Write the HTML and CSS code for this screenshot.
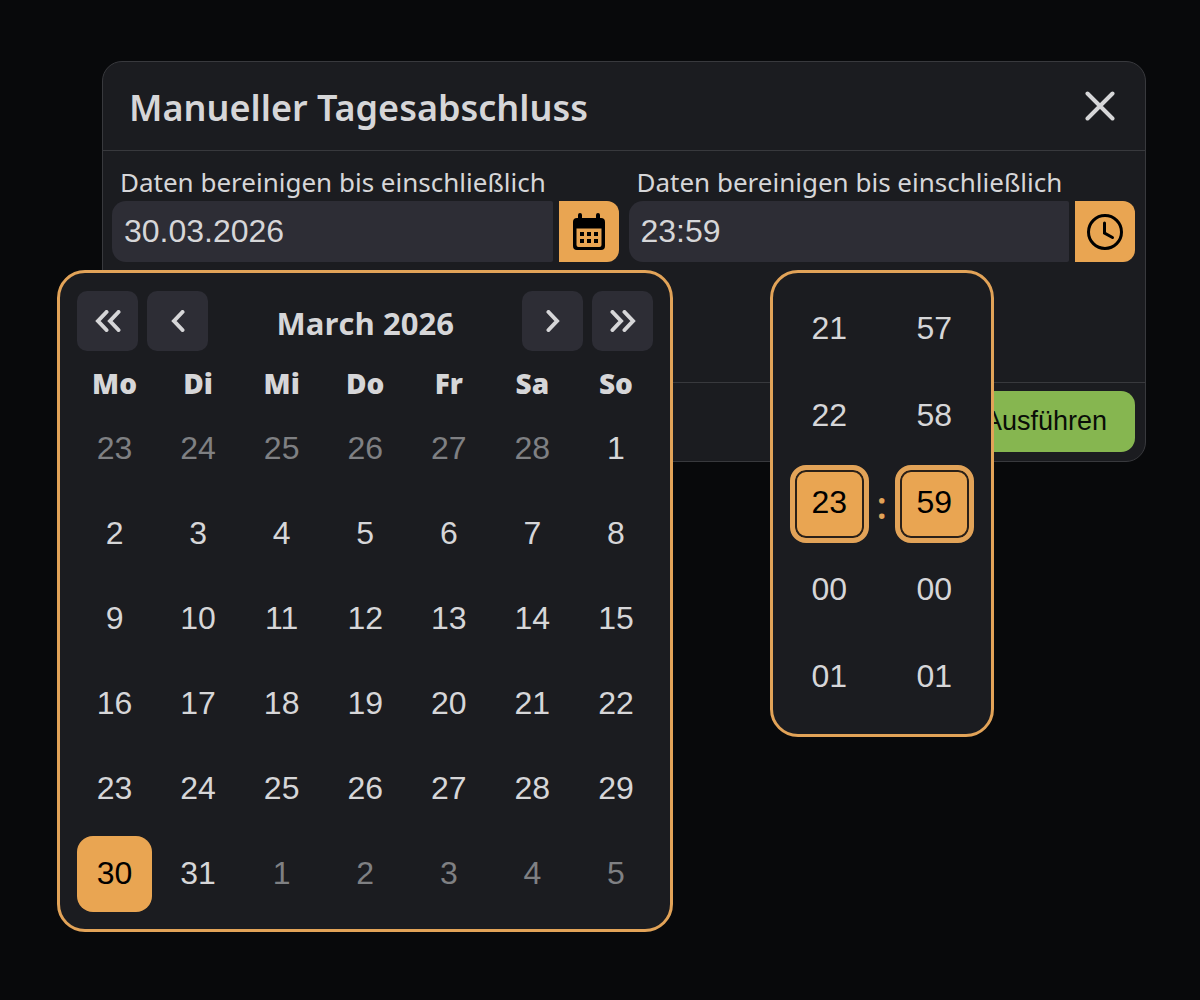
FILE: index.html
```html
<!DOCTYPE html>
<html lang="de">
  <head>
    <meta charset="UTF-8" />
    <meta name="viewport" content="width=device-width, initial-scale=1.0" />
    <title>Manueller Tagesabschluss</title>
    <link rel="stylesheet" href="styles.css">
  </head>
  <body>
    <form class="dialog" role="dialog" aria-labelledby="dialog-title">
      <div class="dialog-header">
        <h1 id="dialog-title">Manueller Tagesabschluss</h1>
        <button type="button" class="close" aria-label="Schließen">
          <svg width="30" height="30" viewBox="0 0 30 30"><path d="M2.5 2.5l25 25M27.5 2.5l-25 25" /></svg>
        </button>
      </div>

      <div class="dialog-body">
        <div class="field">
          <label for="date">Daten bereinigen bis einschließlich</label>
          <div class="input-group">
            <input type="text" id="date" value="30.03.2026" />
            <button type="button" class="picker-toggle" aria-label="Kalender">
              <svg width="34" height="38" viewBox="0 0 34 38">
                <path fill-rule="evenodd" d="M6 2a2 2 0 0 1 4 0V5h14V2a2 2 0 0 1 4 0V5h1a4 4 0 0 1 4 4v24a4 4 0 0 1-4 4H5a4 4 0 0 1-4-4V9a4 4 0 0 1 4-4h1zM4.500 15.500v16.500a2 2 0 0 0 2 2h21a2 2 0 0 0 2-2V15.500z" />
                <path d="M8 19h4v4H8zM15 19h4v4h-4zM22 19h4v4h-4zM8 26h4v4H8zM15 26h4v4h-4zM22 26h4v4h-4z" />
              </svg>
            </button>
          </div>

          <div class="popup calendar">
            <div class="calendar-header">
              <button type="button" class="nav" aria-label="Voriges Jahr">
                <svg width="26" height="22" viewBox="0 0 26 22"><path d="M11.500 2L3 11l8.500 9M23.500 2L15 11l8.500 9" /></svg>
              </button>
              <button type="button" class="nav" aria-label="Voriger Monat">
                <svg width="14" height="22" viewBox="0 0 14 22"><path d="M11.500 2L3 11l8.500 9" /></svg>
              </button>
              <h2>March 2026</h2>
              <button type="button" class="nav" aria-label="Nächster Monat">
                <svg width="14" height="22" viewBox="0 0 14 22"><path d="M2.500 2L11 11l-8.500 9" /></svg>
              </button>
              <button type="button" class="nav" aria-label="Nächstes Jahr">
                <svg width="26" height="22" viewBox="0 0 26 22"><path d="M2.500 2L11 11l-8.500 9M14.500 2L23 11l-8.500 9" /></svg>
              </button>
            </div>
            <table>
              <thead>
                <tr><th>Mo</th><th>Di</th><th>Mi</th><th>Do</th><th>Fr</th><th>Sa</th><th>So</th></tr>
              </thead>
              <tbody id="days"></tbody>
            </table>
          </div>
        </div>

        <div class="field">
          <label for="time">Daten bereinigen bis einschließlich</label>
          <div class="input-group">
            <input type="text" id="time" value="23:59" />
            <button type="button" class="picker-toggle" aria-label="Uhrzeit">
              <svg class="clock" width="38" height="38" viewBox="0 0 38 38">
                <circle cx="19" cy="19" r="16.500" />
                <path d="M18.500 10v10l8 4.500" />
              </svg>
            </button>
          </div>

          <div class="popup time">
            <div class="time-column">
              <button type="button">21</button>
              <button type="button">22</button>
              <button type="button" class="selected">23</button>
              <button type="button">00</button>
              <button type="button">01</button>
            </div>
            <span class="colon">:</span>
            <div class="time-column">
              <button type="button">57</button>
              <button type="button">58</button>
              <button type="button" class="selected">59</button>
              <button type="button">00</button>
              <button type="button">01</button>
            </div>
          </div>
        </div>
      </div>

      <div class="dialog-footer">
        <button type="submit" class="submit">Ausführen</button>
      </div>
    </form>

    <script>
      const days = document.getElementById("days");
      const selected = new Date(2026, 2, 30);

      // first Monday shown in the grid
      const current = new Date(2026, 1, 23);

      for (let week = 0; week < 6; week++) {
        const row = document.createElement("tr");
        for (let i = 0; i < 7; i++) {
          const cell = document.createElement("td");
          const button = document.createElement("button");
          button.type = "button";
          button.className = "day";
          button.textContent = current.getDate();
          if (current.getMonth() !== selected.getMonth()) {
            button.classList.add("outside");
          }
          if (current.getTime() === selected.getTime()) {
            button.classList.add("selected");
          }
          cell.appendChild(button);
          row.appendChild(cell);
          current.setDate(current.getDate() + 1);
        }
        days.appendChild(row);
      }
    </script>
  </body>
</html>
```
FILE: styles.css
```css
* {
  margin: 0;
  padding: 0;
  box-sizing: border-box;
}

body {
  min-height: 100vh;
  padding: 61px 54px 61px 102px;
  background: #08090b;
  color: #d6d6d8;
  font-family: "Open Sans", sans-serif;
}

button,
input {
  border: none;
  color: inherit;
  font-family: "Liberation Sans", Arial, sans-serif;
}

button {
  display: flex;
  align-items: center;
  justify-content: center;
  background: none;
  cursor: pointer;
}

svg {
  display: block;
}

.dialog {
  background: #1b1c20;
  border: 1px solid #38393d;
  border-radius: 20px;
}

.dialog-header {
  display: flex;
  align-items: center;
  justify-content: space-between;
  height: 89px;
  padding: 0 26px;
  border-bottom: 1px solid #38393d;
}

.dialog-header h1 {
  padding-top: 4px;
  font-family: "Noto Sans", sans-serif;
  font-size: 36px;
  font-weight: 600;
  line-height: 48px;
}

.close {
  padding: 4px;
}

.close svg,
.nav svg {
  fill: none;
  stroke: #d6d6d8;
  stroke-width: 4;
  stroke-linecap: round;
}

.dialog-body {
  display: flex;
  gap: 10px;
  min-height: 231px;
  padding: 12px 10px 12px 9px;
}

.field {
  position: relative;
  flex: 1;
  min-width: 0;
}

.field label {
  display: block;
  padding: 0 8px;
  font-family: "Noto Sans", sans-serif;
  font-size: 26px;
  line-height: 38px;
}

.input-group {
  display: flex;
  gap: 6px;
  height: 61px;
}

.input-group input {
  flex: 1;
  min-width: 0;
  padding: 0 12px;
  background: #2d2d35;
  border-radius: 14px 2px 2px 14px;
  font-size: 32px;
}

.picker-toggle {
  width: 60px;
  background: #e9a552;
  border-radius: 0 12px 12px 0;
}

.clock {
  fill: none;
  stroke: #000;
  stroke-width: 3;
  stroke-linecap: round;
}

.popup {
  position: absolute;
  top: 107px;
  left: 50%;
  transform: translateX(-50%);
  background: #1b1c20;
  border: 3px solid #e2a358;
  border-radius: 28px;
}

.calendar {
  width: 616px;
  padding: 18px 8px 8px;
}

.calendar-header {
  display: flex;
  align-items: center;
  gap: 9px;
  padding: 0 9px;
}

.calendar-header h2 {
  flex: 1;
  padding-top: 4px;
  font-size: 31px;
  font-weight: 700;
  line-height: 56px;
  text-align: center;
}

.nav {
  width: 61px;
  height: 60px;
  background: #2d2d35;
  border-radius: 10px;
}

.calendar table {
  width: 100%;
  table-layout: fixed;
  border-spacing: 9px;
}

.calendar th {
  height: 42px;
  padding-top: 4px;
  font-size: 28px;
  font-weight: 800;
  line-height: 38px;
}

.day,
.time-column button {
  width: 100%;
  height: 76px;
  padding-bottom: 2px;
  border-radius: 16px;
  font-size: 32px;
}

.day.outside {
  color: #7f8083;
}

.day.selected,
.time-column .selected {
  background: #e9a552;
  color: #000;
}

.time {
  display: flex;
  align-items: center;
  width: 224px;
  padding: 18px 17px 17px;
}

.time-column {
  display: flex;
  flex: 1;
  flex-direction: column;
  gap: 9px;
}

.time-column button {
  height: 78px;
  padding-bottom: 4px;
}

.time-column .selected {
  border: 5px solid #e2a358;
  box-shadow: inset 0 0 0 2px #2a2018;
}

.colon {
  width: 26px;
  color: #e2a358;
  font-size: 38px;
  font-weight: 600;
  text-align: center;
}

.dialog-footer {
  display: flex;
  justify-content: flex-end;
  padding: 8px 10px 9px;
  border-top: 1px solid #38393d;
}

.submit {
  height: 61px;
  padding: 0 28px;
  background: #86b650;
  border-radius: 14px;
  color: #0a0d08;
  font-size: 27px;
}
```
